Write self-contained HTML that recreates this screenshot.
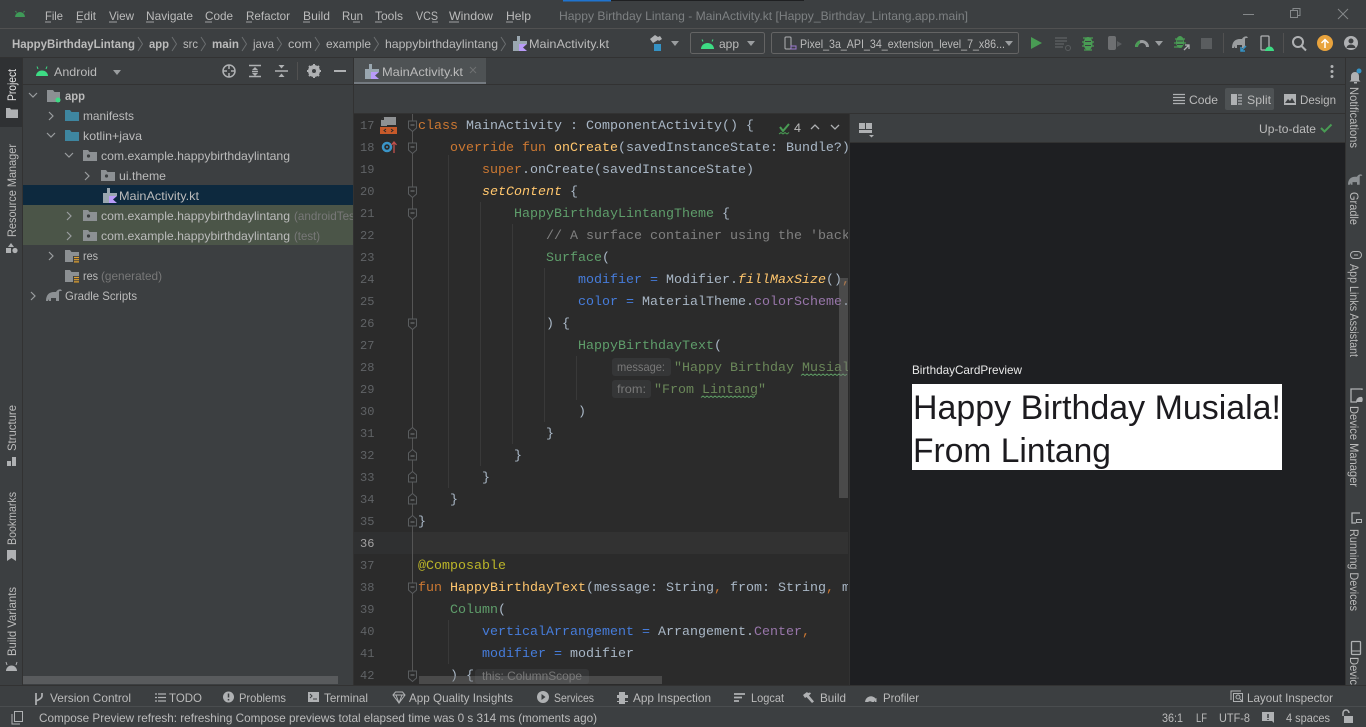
<!DOCTYPE html>
<html lang="en"><head><meta charset="utf-8"><title>Happy Birthday Lintang - MainActivity.kt</title>
<style>
html,body{margin:0;padding:0;background:#3c3f41;width:1366px;height:727px;overflow:hidden}
svg{display:block}
text{font-family:"Liberation Sans",sans-serif;font-size:12px;fill:#bbb;white-space:pre}
.m text,text.m{font-family:"Liberation Mono",monospace;font-size:13.33px;fill:#a9b7c6}
.ln text{font-family:"Liberation Mono",monospace;font-size:12px;fill:#606366}
.k{fill:#cc7832}.f{fill:#ffc66d}.s{fill:#6a8759}.c{fill:#808080}.g{fill:#5f9e6b}.b{fill:#467cda}.p{fill:#9876aa}.a{fill:#bbb529}.i{font-style:italic}
.dim{fill:#787878}
.gi{fill:#afb1b3}
</style></head><body>
<svg width="1366" height="727" viewBox="0 0 1366 727" xmlns="http://www.w3.org/2000/svg">
<defs>
<clipPath id="cc"><rect x="354" y="114" width="494" height="571"/></clipPath>
<clipPath id="pc"><rect x="22" y="85" width="331" height="600"/></clipPath>
<g id="fblue"><path d="M0 0h5l1.500 2H14v9H0z" fill="#3e86a0"/></g>
<g id="pkg"><path d="M0 0h5l1.500 2H14v9H0z" fill="#8c9093"/><circle cx="5.500" cy="6" r="1.600" fill="#3c3f41"/></g>
<g id="res"><path d="M0 0h5l1.500 2H14v4H8v6H0z" fill="#8c9093"/><path d="M9 7.500h5M9 9.700h5M9 11.900h5" stroke="#e0a030" stroke-width="1.200"/></g>
<g id="kt"><path d="M4 0v5H0v10h8V8h6V5h-7V0z" fill="#9aa7b0"/><path d="M6 8h8l-4 3.500 4 3.500H6z" fill="#b99bf8"/></g>
<g id="fd"><path d="M-4 -5h8v7l-4 3.500-4-3.500z" fill="#2b2b2b" stroke="#5a5d5f"/><path d="M-2 -1h4" stroke="#7a7d7f"/></g>
<g id="fu"><path d="M-4 5h8v-7l-4-3.500-4 3.500z" fill="#2b2b2b" stroke="#5a5d5f"/><path d="M-2 1h4" stroke="#7a7d7f"/></g>
<path id="ele" d="M0 12C0 6 3 3 8 3h2c1-2 3-3 5-2.500l1 1.500h-2c-1 0-1 1-1 2v8h-3V9H5v3H3v-2l-1 2z"/>
</defs>

<rect width="1366" height="727" fill="#3c3f41"/>
<!-- top strip -->
<rect x="563" y="0" width="241" height="1" fill="#1f2022"/><rect x="563" y="0" width="48" height="1.500" fill="#1f74d0"/>
<rect x="0" y="28" width="1366" height="1" fill="#515151"/>
<rect x="0" y="57" width="1366" height="1" fill="#323232"/>

<!-- title android -->
<path d="M15 17a5 5 0 0 1 10 0z" fill="#3f9a58"/><path d="M16.500 12.500l-1-1.500M23.500 12.500l1-1.500" stroke="#3f9a58"/>
<!-- menu -->
<g>
<text x="45" y="20" textLength="18" lengthAdjust="spacingAndGlyphs">File</text>
<text x="76" y="20" textLength="20" lengthAdjust="spacingAndGlyphs">Edit</text>
<text x="109" y="20" textLength="25" lengthAdjust="spacingAndGlyphs">View</text>
<text x="146" y="20" textLength="47" lengthAdjust="spacingAndGlyphs">Navigate</text>
<text x="205" y="20" textLength="28" lengthAdjust="spacingAndGlyphs">Code</text>
<text x="246" y="20" textLength="44" lengthAdjust="spacingAndGlyphs">Refactor</text>
<text x="303" y="20" textLength="27" lengthAdjust="spacingAndGlyphs">Build</text>
<text x="342" y="20" textLength="21" lengthAdjust="spacingAndGlyphs">Run</text>
<text x="375" y="20" textLength="28" lengthAdjust="spacingAndGlyphs">Tools</text>
<text x="416" y="20" textLength="22" lengthAdjust="spacingAndGlyphs">VCS</text>
<text x="449" y="20" textLength="44" lengthAdjust="spacingAndGlyphs">Window</text>
<text x="506" y="20" textLength="25" lengthAdjust="spacingAndGlyphs">Help</text>
</g>
<path d="M45 22h6M76 22h6M109 22h8M146 22h8M205 22h7M246 22h6M303 22h7M353 22h7M375 22h7M432 22h6M449 22h10M506 22h7" stroke="#bbb" stroke-width="1" opacity=".8"/>
<text x="559" y="20" textLength="409" lengthAdjust="spacingAndGlyphs" style="fill:#7d8082">Happy Birthday Lintang - MainActivity.kt [Happy_Birthday_Lintang.app.main]</text>
<!-- window controls -->
<path d="M1243 14.500h11" stroke="#85888a"/>
<path d="M1290.500 17.500h7v-7h-7zM1293 10V8.500h7v7h-2" fill="none" stroke="#85888a"/>
<path d="M1338 9l10 10M1348 9l-10 10" stroke="#85888a"/>

<!-- nav bar -->
<g>
<text x="12" y="48" textLength="123" lengthAdjust="spacingAndGlyphs" font-weight="bold">HappyBirthdayLintang</text>
<text x="149" y="48" textLength="20" lengthAdjust="spacingAndGlyphs" font-weight="bold">app</text>
<text x="183" y="48" textLength="15" lengthAdjust="spacingAndGlyphs">src</text>
<text x="212" y="48" textLength="27" lengthAdjust="spacingAndGlyphs" font-weight="bold">main</text>
<text x="253" y="48" textLength="21" lengthAdjust="spacingAndGlyphs">java</text>
<text x="288" y="48" textLength="24" lengthAdjust="spacingAndGlyphs">com</text>
<text x="326" y="48" textLength="45" lengthAdjust="spacingAndGlyphs">example</text>
<text x="385" y="48" textLength="113" lengthAdjust="spacingAndGlyphs">happybirthdaylintang</text>
<text x="529" y="48" textLength="80" lengthAdjust="spacingAndGlyphs">MainActivity.kt</text>
</g>
<path d="M138 37l4.500 7-4.500 7M172 37l4.500 7-4.500 7M201 37l4.500 7-4.500 7M242 37l4.500 7-4.500 7M277 37l4.500 7-4.500 7M315 37l4.500 7-4.500 7M374 37l4.500 7-4.500 7M501 37l4.500 7-4.500 7" fill="none" stroke="#6b6e70"/>
<use href="#kt" x="513" y="36"/>

<!-- run toolbar -->
<path d="M650 39l5-4 3 2 2-1 2 3-3 2-1-1-5 3z" fill="#afb1b3"/><rect x="654" y="44" width="7" height="7" fill="#3592c4"/>
<path d="M671 41h8l-4 5z" fill="#9a9d9f"/>
<rect x="690.500" y="32.500" width="74" height="21" rx="2" fill="none" stroke="#646464"/>
<path d="M701 49a6.500 6 0 0 1 13 0z" fill="#3ddc84"/><path d="M703 41.500l-1-2M712 41.500l1-2" stroke="#3ddc84"/>
<text x="719" y="48" textLength="20" lengthAdjust="spacingAndGlyphs">app</text>
<path d="M747 41h8l-4 5z" fill="#9a9d9f"/>
<rect x="771.500" y="32.500" width="247" height="21" rx="2" fill="none" stroke="#646464"/>
<rect x="785" y="37" width="6" height="12" rx="1" fill="none" stroke="#afb1b3"/><rect x="791" y="46" width="5" height="3" fill="none" stroke="#9b7ad0"/>
<text x="800" y="48" textLength="205" lengthAdjust="spacingAndGlyphs">Pixel_3a_API_34_extension_level_7_x86...</text>
<path d="M1005 41h8l-4 5z" fill="#9a9d9f"/>
<path d="M1031 37l11 6-11 6z" fill="#499c54"/>
<path d="M1055 38h12M1055 41h12M1055 44h9M1055 47h8" stroke="#5a5d5f" stroke-width="1.500"/><circle cx="1068" cy="48" r="2.500" fill="none" stroke="#5a5d5f"/>
<path d="M1083 38h10M1082 42h12M1082 46h12M1084 50h8" stroke="#499c54" stroke-width="1.200"/><ellipse cx="1088" cy="43.500" rx="4.500" ry="6.500" fill="#499c54"/><path d="M1085 41.500h6M1085 45.500h6" stroke="#3c3f41"/>
<rect x="1108" y="36" width="8" height="14" rx="2" fill="#6e7072"/><path d="M1117 41l5 3-5 3z" fill="#5a5d5f"/>
<path d="M1135 47a7 7 0 0 1 14 0h-3a4 4 0 0 0-8 0z" fill="#9a9d9f"/><path d="M1135 47a7 7 0 0 1 5-6.700v3.200a4 4 0 0 0-2 3.500z" fill="#499c54"/>
<path d="M1155 41h8l-4 5z" fill="#9a9d9f"/>
<path d="M1175 39h10M1174 43h12M1174 47h8" stroke="#499c54" stroke-width="1.200"/><ellipse cx="1180" cy="42" rx="4" ry="6" fill="#499c54"/><path d="M1177 41h6M1177 44.500h6" stroke="#3c3f41"/><path d="M1184 50l5-5M1185 45h4v4" fill="none" stroke="#afb1b3" stroke-width="1.300"/>
<rect x="1201" y="38" width="11" height="11" fill="#5a5d5f"/>
<path d="M1223.500 33v20M1283.500 33v20" stroke="#515151"/>
<use href="#ele" x="1232" y="36" fill="#9a9d9f"/><path d="M1241 51l5-5M1241 47v4h4" fill="none" stroke="#3592c4" stroke-width="1.500"/>
<rect x="1261" y="36" width="8" height="14" rx="1" fill="none" stroke="#afb1b3" stroke-width="1.300"/><path d="M1265 51a4 4 0 0 1 9 0z" fill="#3ddc84"/>
<circle cx="1298" cy="42" r="5" fill="none" stroke="#afb1b3" stroke-width="2"/><path d="M1301.500 46l4.500 4.500" stroke="#afb1b3" stroke-width="2"/>
<circle cx="1325" cy="43" r="8" fill="#e8a33d"/><path d="M1325 48v-8M1321.500 43l3.500-3.500 3.500 3.500" fill="none" stroke="#fff" stroke-width="1.500"/>
<circle cx="1351" cy="43" r="7" fill="#afb1b3"/><circle cx="1351" cy="41" r="2.500" fill="#3c3f41"/><path d="M1346.500 48a4.500 3.500 0 0 1 9 0z" fill="#3c3f41"/>

<!-- left stripe -->
<rect x="22" y="58" width="1" height="627" fill="#323232"/>
<rect x="0" y="58" width="22" height="69" fill="#2f3133"/>
<text transform="translate(16,101) rotate(-90)" textLength="32" lengthAdjust="spacingAndGlyphs" style="fill:#e4e4e4">Project</text>
<path d="M6 108h4l1 1.500h7V118H6z" fill="#afb1b3"/>
<text transform="translate(16,237) rotate(-90)" textLength="93" lengthAdjust="spacingAndGlyphs">Resource Manager</text>
<path d="M11 243l3 4H8z" fill="#afb1b3"/><rect x="6" y="248" width="5" height="5" fill="#afb1b3"/><circle cx="15" cy="250.500" r="2.600" fill="#afb1b3"/>
<text transform="translate(16,451) rotate(-90)" textLength="46" lengthAdjust="spacingAndGlyphs">Structure</text>
<path d="M7 461h4v5H7zM12 461h4v5h-4zM12 457h4v4h-4z" fill="#afb1b3"/>
<text transform="translate(16,545) rotate(-90)" textLength="53" lengthAdjust="spacingAndGlyphs">Bookmarks</text>
<path d="M7 550h9v11l-4.500-3-4.500 3z" fill="#afb1b3"/>
<text transform="translate(16,656) rotate(-90)" textLength="69" lengthAdjust="spacingAndGlyphs">Build Variants</text>
<path d="M6 671a5.500 5.500 0 0 1 11 0z" fill="#afb1b3"/><path d="M7 665l-1-3M16 665l1-3" stroke="#afb1b3"/>

<!-- project panel -->
<rect x="22" y="84" width="332" height="1" fill="#323232"/>
<path d="M36 76a6 5.500 0 0 1 12 0z" fill="#3ddc84"/><path d="M38 69l-1-2.500M46 69l1-2.500" stroke="#3ddc84"/>
<text x="54" y="76" textLength="43" lengthAdjust="spacingAndGlyphs">Android</text>
<path d="M113 70h8l-4 5z" fill="#9a9d9f"/>
<circle cx="229" cy="71" r="6" fill="none" stroke="#afb1b3" stroke-width="1.500"/><path d="M229 65v4M229 73v4M223 71h4M231 71h4" stroke="#afb1b3" stroke-width="1.500"/>
<path d="M249 65.500h12M249 76.500h12M252 71.500h6" stroke="#afb1b3" stroke-width="1.500"/><path d="M255 67l3 3h-6zM255 76l-3-3h6z" fill="#afb1b3"/>
<path d="M275 71h13" stroke="#afb1b3" stroke-width="1.500"/><path d="M278.500 65h6l-3 3.500zM281.500 73.500l3 3.500h-6z" fill="#afb1b3"/>
<path d="M297.500 62v18" stroke="#515151"/>
<circle cx="314" cy="71" r="4.500" fill="none" stroke="#afb1b3" stroke-width="3"/><path d="M314 64v14M307 71h14M309 66l10 10M319 66l-10 10" stroke="#afb1b3" stroke-width="2"/><circle cx="314" cy="71" r="2" fill="#3c3f41"/>
<path d="M334 71h12" stroke="#afb1b3" stroke-width="2"/>

<rect x="23" y="185" width="330" height="20" fill="#0d293e"/>
<rect x="23" y="205" width="330" height="40" fill="#4b5548"/>
<g clip-path="url(#pc)">
<path d="M29 93l4 4 4-4M47 133l4 4 4-4M65 153l4 4 4-4" fill="none" stroke="#9a9d9f" stroke-width="1.200"/>
<path d="M49 112l4 4-4 4M85 172l4 4-4 4M67 212l4 4-4 4M67 232l4 4-4 4M49 252l4 4-4 4M31 292l4 4-4 4" fill="none" stroke="#9a9d9f" stroke-width="1.200"/>
<path d="M47 90h6l1.500 2H60v10H47z" fill="#8c9093"/><circle cx="58" cy="100" r="2.500" fill="#3ddc84"/>
<use href="#fblue" x="65" y="110"/><use href="#fblue" x="65" y="130"/>
<use href="#pkg" x="83" y="150"/><use href="#pkg" x="101" y="170"/><use href="#pkg" x="83" y="210"/><use href="#pkg" x="83" y="230"/>
<use href="#kt" x="103" y="188"/>
<use href="#res" x="65" y="250"/><use href="#res" x="65" y="270"/>
<use href="#ele" x="46" y="289" fill="#8c9093"/>
<text x="65" y="100" textLength="20" lengthAdjust="spacingAndGlyphs" font-weight="bold">app</text>
<text x="83" y="120" textLength="51" lengthAdjust="spacingAndGlyphs">manifests</text>
<text x="83" y="140" textLength="59" lengthAdjust="spacingAndGlyphs">kotlin+java</text>
<text x="101" y="160" textLength="189" lengthAdjust="spacingAndGlyphs">com.example.happybirthdaylintang</text>
<text x="119" y="180" textLength="47" lengthAdjust="spacingAndGlyphs">ui.theme</text>
<text x="119" y="200" textLength="80" lengthAdjust="spacingAndGlyphs">MainActivity.kt</text>
<text x="101" y="220" textLength="189" lengthAdjust="spacingAndGlyphs">com.example.happybirthdaylintang</text>
<text x="294" y="220" class="dim" textLength="68" lengthAdjust="spacingAndGlyphs">(androidTest)</text>
<text x="101" y="240" textLength="189" lengthAdjust="spacingAndGlyphs">com.example.happybirthdaylintang</text>
<text x="294" y="240" class="dim" textLength="26" lengthAdjust="spacingAndGlyphs">(test)</text>
<text x="83" y="260" textLength="15" lengthAdjust="spacingAndGlyphs">res</text>
<text x="83" y="280" textLength="15" lengthAdjust="spacingAndGlyphs">res</text>
<text x="101" y="280" class="dim" textLength="61" lengthAdjust="spacingAndGlyphs">(generated)</text>
<text x="65" y="300" textLength="72" lengthAdjust="spacingAndGlyphs">Gradle Scripts</text>
</g>
<rect x="23" y="676" width="315" height="8" fill="#595b5d"/>
<rect x="353" y="58" width="1" height="627" fill="#323232"/>

<!-- editor tabs -->
<rect x="354" y="58" width="132" height="24" fill="#4e5254"/>
<rect x="354" y="82" width="132" height="3" fill="#747a80"/>
<rect x="354" y="84" width="992" height="1" fill="#323232"/>
<use href="#kt" x="365" y="64"/>
<text x="382" y="76" textLength="81" lengthAdjust="spacingAndGlyphs">MainActivity.kt</text>
<path d="M470 67l6 6M476 67l-6 6" stroke="#6e7072"/>
<circle cx="1332" cy="66.500" r="1.500" fill="#afb1b3"/><circle cx="1332" cy="71.500" r="1.500" fill="#afb1b3"/><circle cx="1332" cy="76.500" r="1.500" fill="#afb1b3"/>

<!-- split row -->
<rect x="354" y="113" width="992" height="1" fill="#323232"/>
<path d="M1173 94.500h12M1173 97.500h12M1173 100.500h12M1173 103.500h12" stroke="#afb1b3" stroke-width="1.300"/>
<text x="1189" y="104" textLength="29" lengthAdjust="spacingAndGlyphs">Code</text>
<rect x="1225" y="88" width="49" height="22" rx="2" fill="#4e5254"/>
<rect x="1231" y="94" width="6" height="11" fill="#afb1b3"/><path d="M1238 95h4M1238 98h4M1238 101h4M1238 104h4" stroke="#afb1b3" stroke-width="1.300"/>
<text x="1247" y="104" textLength="24" lengthAdjust="spacingAndGlyphs">Split</text>
<rect x="1284" y="94" width="12" height="11" fill="#afb1b3"/><path d="M1285 103l3-4 2 2 2-3 3 5z" fill="#3c3f41"/>
<text x="1300" y="104" textLength="36" lengthAdjust="spacingAndGlyphs">Design</text>

<!-- editor -->
<rect x="354" y="114" width="495" height="571" fill="#2b2b2b"/>
<rect x="412" y="532" width="436" height="22" fill="#323232"/>
<rect x="354" y="532" width="58" height="22" fill="#2f3031"/>
<path d="M412.500 114V680" stroke="#555"/>
<g stroke="#393939">
<path d="M448.500 155V488M480.500 202V466M512.500 224V444M544.500 268V422M576.500 356V400M448.500 620V664"/>
</g>
<g class="ln" transform="translate(0,-1)">
<text x="360" y="130">17</text><text x="360" y="152">18</text><text x="360" y="174">19</text><text x="360" y="196">20</text><text x="360" y="218">21</text><text x="360" y="240">22</text><text x="360" y="262">23</text><text x="360" y="284">24</text><text x="360" y="306">25</text><text x="360" y="328">26</text><text x="360" y="350">27</text><text x="360" y="372">28</text><text x="360" y="394">29</text><text x="360" y="416">30</text><text x="360" y="438">31</text><text x="360" y="460">32</text><text x="360" y="482">33</text><text x="360" y="504">34</text><text x="360" y="526">35</text><text x="360" y="548" style="fill:#a4a3a3">36</text><text x="360" y="570">37</text><text x="360" y="592">38</text><text x="360" y="614">39</text><text x="360" y="636">40</text><text x="360" y="658">41</text><text x="360" y="680">42</text>
</g>
<!-- gutter icons -->
<path d="M385 117h-1l-3 3v6h6v-1h9v-8z" fill="#8e9193"/><path d="M384 117l-3 3h3z" fill="#2b2b2b"/>
<rect x="380" y="127" width="17" height="7" fill="#c75a2a"/><path d="M386 129l-2 1.500 2 1.500M391 129l2 1.500-2 1.500" fill="none" stroke="#2b2b2b"/>
<circle cx="387" cy="147" r="4" fill="none" stroke="#3a95c8" stroke-width="2.500"/><circle cx="387" cy="147" r="1" fill="#3a95c8"/>
<path d="M394 153v-11M391.500 145l2.500-3 2.500 3" fill="none" stroke="#c0504d" stroke-width="1.300"/>
<!-- folds -->
<use href="#fd" x="412.500" y="126"/><use href="#fd" x="412.500" y="148"/><use href="#fd" x="412.500" y="192"/><use href="#fd" x="412.500" y="214"/><use href="#fd" x="412.500" y="324"/>
<use href="#fu" x="412.500" y="433"/><use href="#fu" x="412.500" y="455"/><use href="#fu" x="412.500" y="477"/><use href="#fu" x="412.500" y="499"/><use href="#fu" x="412.500" y="521"/>
<use href="#fd" x="412.500" y="588"/><use href="#fd" x="412.500" y="676"/>

<!-- hints -->
<rect x="612" y="358" width="59" height="18" rx="3" fill="#353637"/>
<text x="617" y="371" class="dim" textLength="48" lengthAdjust="spacingAndGlyphs">message:</text>
<rect x="612" y="380" width="39" height="18" rx="3" fill="#353637"/>
<text x="617" y="393" class="dim" textLength="29" lengthAdjust="spacingAndGlyphs">from:</text>

<g class="m" clip-path="url(#cc)" transform="translate(0,-1)">
<text x="418" y="130" xml:space="preserve"><tspan class="k">class</tspan> MainActivity : ComponentActivity() {</text>
<text x="450" y="152" xml:space="preserve"><tspan class="k">override fun </tspan><tspan class="f">onCreate</tspan>(savedInstanceState: Bundle?)</text>
<text x="482" y="174" xml:space="preserve"><tspan class="k">super</tspan>.onCreate(savedInstanceState)</text>
<text x="482" y="196" xml:space="preserve"><tspan class="f i">setContent</tspan> {</text>
<text x="514" y="218" xml:space="preserve"><tspan class="g">HappyBirthdayLintangTheme</tspan> {</text>
<text x="546" y="240" xml:space="preserve"><tspan class="c">// A surface container using the 'background' color</tspan></text>
<text x="546" y="262"><tspan class="g">Surface</tspan>(</text>
<text x="578" y="284" xml:space="preserve"><tspan class="b">modifier = </tspan>Modifier.<tspan class="f i">fillMaxSize</tspan>()<tspan class="k">,</tspan></text>
<text x="578" y="306" xml:space="preserve"><tspan class="b">color = </tspan>MaterialTheme.<tspan class="p">colorScheme</tspan>.background</text>
<text x="546" y="328">) {</text>
<text x="578" y="350"><tspan class="g">HappyBirthdayText</tspan>(</text>
<text x="674" y="372"><tspan class="s">"Happy Birthday Musiala!"</tspan></text>
<text x="654" y="394"><tspan class="s">"From Lintang"</tspan></text>
<text x="578" y="416">)</text>
<text x="546" y="438">}</text>
<text x="514" y="460">}</text>
<text x="482" y="482">}</text>
<text x="450" y="504">}</text>
<text x="418" y="526">}</text>
<text x="418" y="570"><tspan class="a">@Composable</tspan></text>
<text x="418" y="592" xml:space="preserve"><tspan class="k">fun </tspan><tspan class="f">HappyBirthdayText</tspan>(message: String<tspan class="k">,</tspan> from: String<tspan class="k">,</tspan> modifier</text>
<text x="450" y="614"><tspan class="g">Column</tspan>(</text>
<text x="482" y="636" xml:space="preserve"><tspan class="b">verticalArrangement = </tspan>Arrangement.<tspan class="p">Center</tspan><tspan class="k">,</tspan></text>
<text x="482" y="658" xml:space="preserve"><tspan class="b">modifier = </tspan>modifier</text>
<text x="450" y="680">) {</text>
<path d="M801 376.500l2-1.500 2 1.500 2-1.500 2 1.500 2-1.500 2 1.500 2-1.500 2 1.500 2-1.500 2 1.500 2-1.500 2 1.500 2-1.500 2 1.500 2-1.500 2 1.500 2-1.500 2 1.500 2-1.500 2 1.500 2-1.500 2 1.500 2-1.500" fill="none" stroke="#5d9a63"/>
<path d="M701 398.500l2-1.500 2 1.500 2-1.500 2 1.500 2-1.500 2 1.500 2-1.500 2 1.500 2-1.500 2 1.500 2-1.500 2 1.500 2-1.500 2 1.500 2-1.500 2 1.500 2-1.500 2 1.500 2-1.500 2 1.500 2-1.500 2 1.500 2-1.500 2 1.500 2-1.500 2 1.500 2-1.500" fill="none" stroke="#5d9a63"/>
</g>
<rect x="475" y="669" width="114" height="15" rx="3" fill="#353637"/>
<text x="482" y="680" class="dim" textLength="100" lengthAdjust="spacingAndGlyphs">this: ColumnScope</text>
<rect x="419" y="676" width="243" height="8" fill="#7a7a7a" opacity=".4"/>
<rect x="839" y="278" width="9" height="220" fill="#7a7a7a" opacity=".4"/>
<!-- inspection widget -->
<path d="M780 127l3 4 6-7" fill="none" stroke="#499c54" stroke-width="2"/><path d="M779 134l2-1.500 2 1.500 2-1.500 2 1.500 2-1.500" fill="none" stroke="#499c54"/>
<text x="794" y="132" textLength="7" lengthAdjust="spacingAndGlyphs">4</text>
<path d="M811 129l4-4 4 4M831 125l4 4 4-4" fill="none" stroke="#afb1b3" stroke-width="1.300"/>

<!-- preview -->
<rect x="849" y="114" width="1" height="571" fill="#323232"/>
<rect x="850" y="114" width="495" height="28" fill="#3c3f41"/>
<rect x="850" y="142" width="495" height="1" fill="#323232"/>
<rect x="850" y="143" width="495" height="542" fill="#1e1f22"/>
<path d="M859 123h6v6h-6zM866 123h6v6h-6zM859 130h13v3h-13z" fill="#afb1b3"/><path d="M869 135h5l-2.500 2.500z" fill="#afb1b3"/>
<text x="1259" y="133" textLength="57" lengthAdjust="spacingAndGlyphs">Up-to-date</text>
<path d="M1321 128l3.500 3.500 7-7" fill="none" stroke="#499c54" stroke-width="2"/>
<text x="912" y="374" textLength="110" lengthAdjust="spacingAndGlyphs" style="fill:#e8e8e8">BirthdayCardPreview</text>
<rect x="912" y="384" width="370" height="86" fill="#fff"/>
<text x="913" y="419" textLength="368" lengthAdjust="spacingAndGlyphs" style="font-size:34px;fill:#1c1b1f">Happy Birthday Musiala!</text>
<text x="913" y="462" textLength="198" lengthAdjust="spacingAndGlyphs" style="font-size:34px;fill:#1c1b1f">From Lintang</text>

<!-- right stripe -->
<rect x="1345" y="58" width="1" height="627" fill="#323232"/>
<path d="M1351 80v-4a4 4 0 0 1 8 0v4l1.500 1.500h-11z" fill="#afb1b3"/><circle cx="1359" cy="71" r="2.500" fill="#3592c4"/><rect x="1354" y="82" width="3" height="1.500" fill="#afb1b3"/>
<text transform="translate(1350,87) rotate(90)" textLength="61" lengthAdjust="spacingAndGlyphs">Notifications</text>
<use href="#ele" transform="translate(1348,174) scale(.9)" fill="#8c9093"/>
<text transform="translate(1350,192) rotate(90)" textLength="33" lengthAdjust="spacingAndGlyphs">Gradle</text>
<rect x="1350.500" y="251.500" width="11" height="7" rx="3.500" fill="none" stroke="#afb1b3"/><path d="M1354 255h4" stroke="#afb1b3"/>
<text transform="translate(1350,264) rotate(90)" textLength="93" lengthAdjust="spacingAndGlyphs">App Links Assistant</text>
<path d="M1362 390v-1h-11v13h6" fill="none" stroke="#afb1b3" stroke-width="1.300"/><path d="M1356 402a5 5 0 0 1 6-5 5 5 0 0 1 0 5z" fill="#afb1b3"/>
<text transform="translate(1350,406) rotate(90)" textLength="81" lengthAdjust="spacingAndGlyphs">Device Manager</text>
<path d="M1360 513h-8v10h4" fill="none" stroke="#afb1b3" stroke-width="1.300"/><rect x="1356.500" y="519.500" width="5" height="3" fill="none" stroke="#afb1b3"/>
<text transform="translate(1350,529) rotate(90)" textLength="82" lengthAdjust="spacingAndGlyphs">Running Devices</text>
<rect x="1351.500" y="641.500" width="9" height="13" rx="1" fill="none" stroke="#afb1b3" stroke-width="1.300"/><path d="M1352 651h8" stroke="#afb1b3"/>
<text transform="translate(1350,657) rotate(90)" textLength="28" lengthAdjust="spacingAndGlyphs">Devic</text>

<!-- bottom toolbar -->
<rect x="0" y="685" width="1366" height="1" fill="#323232"/>
<rect x="0" y="706" width="1366" height="1" fill="#4a4d4f"/>
<path d="M36 693v12M42 693v3q0 2.500-6 5" fill="none" stroke="#afb1b3" stroke-width="1.700"/>
<text x="50" y="702" textLength="81" lengthAdjust="spacingAndGlyphs">Version Control</text>
<path d="M155 694h2M158 694h8M155 697.500h2M158 697.500h8M155 701h2M158 701h8" stroke="#afb1b3" stroke-width="1.300"/>
<text x="169" y="702" textLength="33" lengthAdjust="spacingAndGlyphs">TODO</text>
<circle cx="228.500" cy="697" r="5.500" fill="#afb1b3"/><path d="M228.500 693.500v4M228.500 699v1.500" stroke="#3c3f41" stroke-width="1.500"/>
<text x="239" y="702" textLength="47" lengthAdjust="spacingAndGlyphs">Problems</text>
<rect x="308" y="692" width="11" height="10" fill="#afb1b3"/><path d="M310 694l2 2-2 2M313 699h4" fill="none" stroke="#3c3f41"/>
<text x="324" y="702" textLength="44" lengthAdjust="spacingAndGlyphs">Terminal</text>
<path d="M393 695l2.500-3h7l2.500 3-6 8zM393 695h12M396 695l3 8 3-8" fill="none" stroke="#afb1b3"/>
<text x="409" y="702" textLength="104" lengthAdjust="spacingAndGlyphs">App Quality Insights</text>
<circle cx="543" cy="697" r="6" fill="#afb1b3"/><path d="M541.500 694l4 3-4 3z" fill="#3c3f41"/>
<text x="554" y="702" textLength="40" lengthAdjust="spacingAndGlyphs">Services</text>
<path d="M619 692h6v3h3v3h-3v3h3v1h-3v2h-6v-2h-2v-1h2v-3h-2v-3h2z" fill="#afb1b3"/>
<text x="633" y="702" textLength="78" lengthAdjust="spacingAndGlyphs">App Inspection</text>
<path d="M734 694h11M734 697.500h8M734 701h5" stroke="#afb1b3" stroke-width="1.700"/>
<text x="751" y="702" textLength="33" lengthAdjust="spacingAndGlyphs">Logcat</text>
<path d="M803 695l4-3 1 1 2-.5 1 1-2 2 5 6-2 1.500-5.500-6-1.500 1z" fill="#afb1b3"/>
<text x="820" y="702" textLength="26" lengthAdjust="spacingAndGlyphs">Build</text>
<path d="M865 702a6 6 0 0 1 11-3l-2 3h-2a3 3 0 0 0-4 0z" fill="#afb1b3"/><path d="M875 702v-3l1.500-1v4z" fill="#afb1b3"/>
<text x="883" y="702" textLength="36" lengthAdjust="spacingAndGlyphs">Profiler</text>
<path d="M1241 691h-10v9" fill="none" stroke="#afb1b3"/><rect x="1233.500" y="693.500" width="9" height="8" fill="none" stroke="#afb1b3"/><circle cx="1238" cy="697" r="2" fill="none" stroke="#afb1b3"/><path d="M1240 699l3 3" stroke="#afb1b3"/>
<text x="1247" y="702" textLength="86" lengthAdjust="spacingAndGlyphs">Layout Inspector</text>

<!-- status bar -->
<rect x="14.500" y="711.500" width="8" height="10" fill="none" stroke="#afb1b3"/><path d="M12 714v10h8" fill="none" stroke="#afb1b3"/>
<text x="39" y="722" textLength="558" lengthAdjust="spacingAndGlyphs">Compose Preview refresh: refreshing Compose previews total elapsed time was 0 s 314 ms (moments ago)</text>
<text x="1162" y="722" textLength="21" lengthAdjust="spacingAndGlyphs">36:1</text>
<text x="1196" y="722" textLength="11" lengthAdjust="spacingAndGlyphs">LF</text>
<text x="1219" y="722" textLength="31" lengthAdjust="spacingAndGlyphs">UTF-8</text>
<path d="M1262 712h12v11l-2-2h-10z" fill="#afb1b3"/><path d="M1268 714v4M1268 719v1" stroke="#3c3f41" stroke-width="1.500"/>
<text x="1286" y="722" textLength="44" lengthAdjust="spacingAndGlyphs">4 spaces</text>
<path d="M1343 716v-3a3 3 0 0 1 6 0" fill="none" stroke="#afb1b3" stroke-width="1.500"/><rect x="1344" y="716" width="9" height="7" fill="#afb1b3"/>
</svg>
</body></html>
